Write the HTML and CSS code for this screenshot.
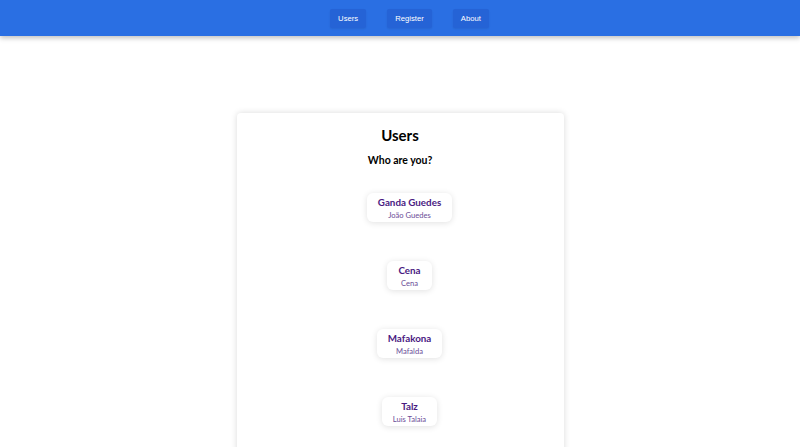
FILE: index.html
```html
<!DOCTYPE html>
<html lang="en">
<head>
  <meta charset="UTF-8">
  <title>Users</title>
  <link rel="stylesheet" href="styles.css">
</head>
<body>

  <!-- Navbar -->
  <div class="navbar">
    <a href="#" class="nav-btn">Users</a>
    <a href="#" class="nav-btn">Register</a>
    <a href="#" class="nav-btn">About</a>
  </div>

  <!-- Users panel -->
  <div class="page">
    <div class="panel">
      <h1>Users</h1>
      <h2>Who are you?</h2>
      <div class="user-list">
        <div class="user-card">
          <div class="nick">Ganda Guedes</div>
          <div class="name">João Guedes</div>
        </div>
        <div class="user-card">
          <div class="nick">Cena</div>
          <div class="name">Cena</div>
        </div>
        <div class="user-card">
          <div class="nick">Mafakona</div>
          <div class="name">Mafalda</div>
        </div>
        <div class="user-card">
          <div class="nick">Talz</div>
          <div class="name">Luis Talaia</div>
        </div>
      </div>
    </div>
  </div>

</body>
</html>
```

FILE: styles.css
```css
body {
  margin: 0;
  font-family: Lato, sans-serif;
  background: #fff;
  overflow: hidden;
}

/* Navbar */
.navbar {
  background-color: #2a6fe3;
  height: 36px;
  display: flex;
  justify-content: center;
  align-items: center;
  gap: 21px;
  padding-left: 19px;
  box-shadow: 0 2px 5px rgba(0, 0, 0, 0.25);
  position: relative;
}

.nav-btn {
  font-family: "Liberation Sans", Arial, sans-serif;
  font-size: 7.7px;
  color: #fff;
  text-decoration: none;
  background-color: #2563d6;
  padding: 5px 8px;
  line-height: 9px;
  border-radius: 2px;
  box-shadow: 0 1px 2px rgba(0, 0, 0, 0.08);
}

/* Panel */
.page {
  padding-top: 77px;
  display: flex;
  justify-content: center;
}

.panel {
  width: 327px;
  min-height: 400px;
  background: #fff;
  border-radius: 4px;
  box-shadow: 0 0 6px rgba(0, 0, 0, 0.15);
  text-align: center;
  padding-top: 12px;
}

.panel h1 {
  margin: 0;
  font-size: 15px;
  line-height: 20px;
  color: #000;
}

.panel h2 {
  margin: 8px 0 0;
  font-size: 10.5px;
  line-height: 14px;
  color: #000;
}

.user-list {
  display: flex;
  flex-direction: column;
  align-items: center;
  gap: 39px;
  margin-top: 26px;
  padding-left: 19px;
}

.user-card {
  background: #fff;
  border-radius: 6px;
  box-shadow: 0 1px 6px rgba(0, 0, 0, 0.12);
  padding: 3px 11px 4px;
  height: 22px;
}

.nick {
  font-size: 9.8px;
  font-weight: bold;
  line-height: 12px;
  color: #4a1a82;
}

.name {
  font-size: 7.6px;
  line-height: 10px;
  color: #6b4d98;
  margin-top: 2px;
}
```
